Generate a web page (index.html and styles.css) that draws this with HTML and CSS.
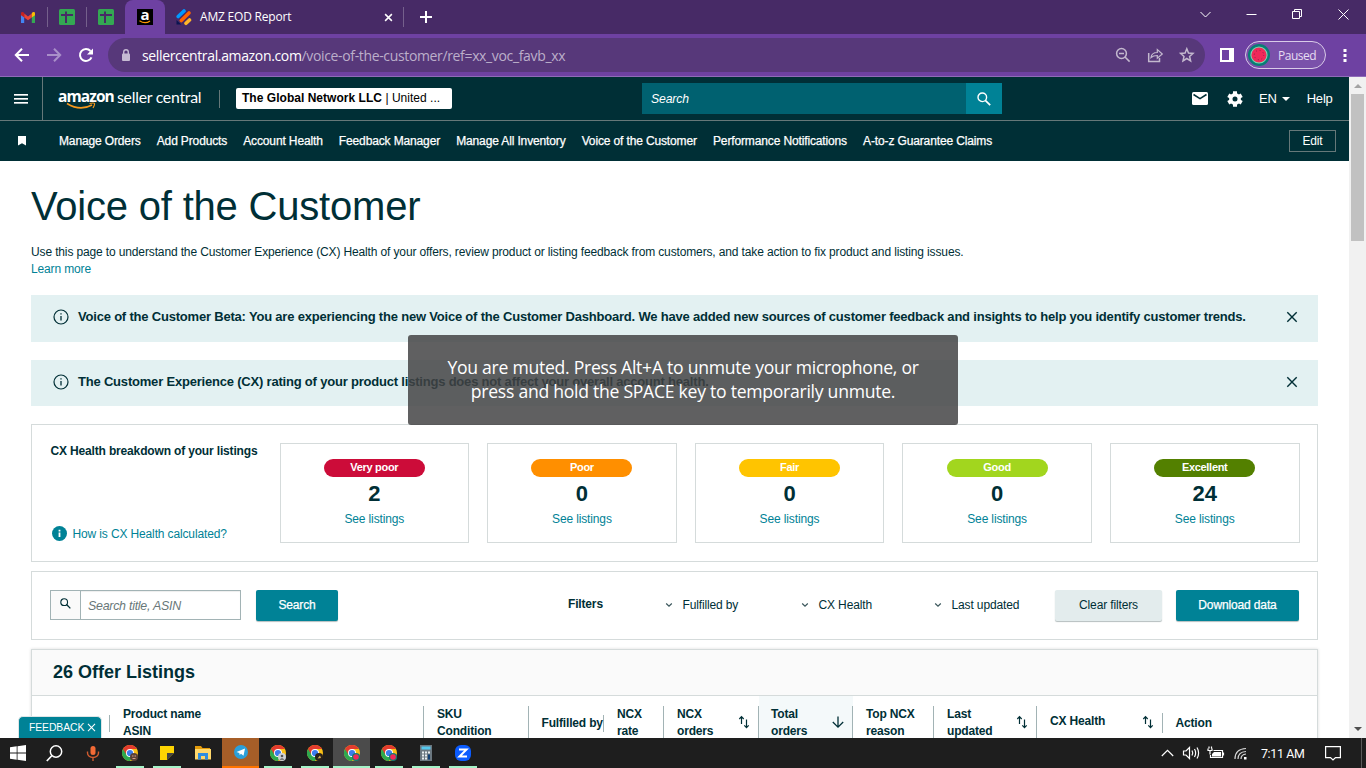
FILE: index.html
```html
<!DOCTYPE html>
<html lang="en">
<head>
    <meta charset="UTF-8">
    <meta name="viewport" content="width=device-width, initial-scale=1.0">
    <title>Voice of the Customer</title>
    <link rel="stylesheet" href="styles.css">
</head>
<body>
    <svg class="defs" width="0" height="0">
        <symbol id="sheet" viewBox="0 0 16 16">
            <rect width="16" height="16" rx="1.5" fill="#34a853"/>
            <path d="M2 6h12M7 2.500v11.500" stroke="#472a66" stroke-width="2"/>
        </symbol>
        <symbol id="chrome" viewBox="0 0 16 16">
            <circle cx="8" cy="8" r="8" fill="#fbc116"/>
            <path d="M8 8 1.070 4A8 8 0 0 0 8 16l3.400-6z" fill="#2da94f"/>
            <path d="M8 4h6.930A8 8 0 0 0 1.070 4l3.500 6z" fill="#e33b2e"/>
            <circle cx="8" cy="8" r="4" fill="#fff"/>
            <circle cx="8" cy="8" r="3.100" fill="#3b7ded"/>
        </symbol>
        <symbol id="info" viewBox="0 0 16 16">
            <circle cx="8" cy="8" r="7" fill="none" stroke="#002f36" stroke-width="1.200"/>
            <path d="M8 7v4.500M8 4.200v1.400" stroke="#002f36" stroke-width="1.300"/>
        </symbol>
        <symbol id="close" viewBox="0 0 12 12">
            <path d="M1.300 1.300l9.400 9.400M10.700 1.300l-9.400 9.400" stroke="currentColor" stroke-width="1.400"/>
        </symbol>
        <symbol id="sort" viewBox="0 0 12 14">
            <path d="M3.500 9V2M1.300 4l2.200-2.300L5.700 4M8.500 4.500v8M6.300 10.300l2.200 2.300 2.200-2.300" fill="none" stroke="#002f36" stroke-width="1.200"/>
        </symbol>
        <symbol id="chevron" viewBox="0 0 8 6">
            <path d="M1.200 1.500L4 4.200l2.800-2.700" fill="none" stroke="#3a565b" stroke-width="1.200"/>
        </symbol>
        <symbol id="magnifier" viewBox="0 0 14 14">
            <circle cx="5.300" cy="5.300" r="4.300" fill="none" stroke="currentColor" stroke-width="1.400"/>
            <path d="M8.300 8.300l4.900 4.900" stroke="currentColor" stroke-width="1.700"/>
        </symbol>
    </svg>

    <!-- browser tabs -->
    <div class="tabs">
        <div class="tab tab-mail">
            <svg width="14" height="11" viewBox="0 0 14 11"><path d="M0 1.500V11h3.200V4.500z" fill="#4285f4"/><path d="M14 1.500V11h-3.200V4.500z" fill="#34a853"/><path d="M3.200 1.500v4L7 8.300l3.800-2.800v-4L7 4.500z" fill="#ea4335"/><path d="M0 1.500C0 0 1.800-.4 3.200.9v4.600L0 3.200z" fill="#c5221f"/><path d="M14 1.500c0-1.500-1.800-1.900-3.200-.6v4.600L14 3.200z" fill="#fbbc04"/></svg>
        </div>
        <div class="tab tab-sheet"><svg width="16" height="16"><use href="#sheet"/></svg></div>
        <div class="tab tab-sheet"><svg width="16" height="16"><use href="#sheet"/></svg></div>
        <div class="tab tab-active">
            <span class="amz-icon">a<svg width="12" height="4" viewBox="0 0 12 4"><path d="M.5.700Q6 4.600 11 1" fill="none" stroke="#ff9900" stroke-width="1.200"/></svg></span>
        </div>
        <div class="tab tab-wide">
            <svg width="16" height="17" viewBox="0 0 16 17"><g stroke-linecap="round" stroke-width="3.600"><path d="M2.200 7.500L8 2" stroke="#0099ff"/><path d="M5.300 11.500L13 4" stroke="#ff6100"/><path d="M10 14.300L13.500 11" stroke="#ffb629"/></g><path d="M.5 11v4.500h4.700z" fill="#0a1551"/></svg>
            <span>AMZ EOD Report</span>
            <svg class="tab-x" width="9" height="9" viewBox="0 0 12 12"><path d="M1.500 1.500l9 9M10.500 1.500l-9 9" stroke="#fff" stroke-width="2"/></svg>
        </div>
        <svg class="new-tab" width="12" height="12" viewBox="0 0 12 12"><path d="M6 0v12M0 6h12" stroke="#fff" stroke-width="2"/></svg>
        <svg class="win-buttons" width="150" height="14" viewBox="0 0 150 14"><g fill="none" stroke="#fff"><path d="M.5 5l5 5 5-5"/><path d="M46.500 7.500h10"/><path d="M92.500 4.500h7v7h-7zM94.500 4.500v-2h7v7h-2"/><path d="M138.500 2.500l10 10M148.500 2.500l-10 10"/></g></svg>
    </div>

    <!-- address bar -->
    <div class="toolbar">
        <svg class="tool-nav" width="80" height="16" viewBox="0 0 80 16"><g fill="none" stroke-width="2"><path d="M15 8H2M8 1.800L1.800 8 8 14.200" stroke="#fff"/><path d="M33 8h13M40 1.800L46.200 8 40 14.200" stroke="#a98fc9"/><path d="M77.500 10.300A6 6 0 1 1 76.500 4" stroke="#fff"/><path d="M79 1.500v6h-6z" fill="#fff" stroke="none"/></g></svg>
        <div class="address">
            <svg width="10" height="13" viewBox="0 0 10 13"><rect x="1" y="4.500" width="8" height="7.500" rx="1" fill="#c6bad3"/><path d="M2.700 5V3a2.300 2.300 0 0 1 4.600 0V5" fill="none" stroke="#c6bad3" stroke-width="1.400"/></svg>
            <span class="url"><b>sellercentral.amazon.com</b>/voice-of-the-customer/ref=xx_voc_favb_xx</span>
            <svg class="address-icons" width="80" height="16" viewBox="0 0 80 16"><g fill="none" stroke="#c3b8ce" stroke-width="1.500"><circle cx="6.500" cy="6.500" r="4.900"/><path d="M4 6.500h5M10 10l4.600 4.600"/><path d="M33.700 6v8.500h10.800V11"/><path d="M36 10.500q.7-5 6.300-5V2.500l5 4.500-5 4.300V8.500q-4 0-6.300 2z" stroke-width="1.200"/><path d="M71.800 1.800l1.700 4.200 4.500.4-3.400 3 1 4.500-3.800-2.400-3.800 2.400 1-4.500-3.400-3 4.500-.4z"/></g></svg>
        </div>
        <svg class="side-panel" width="14" height="14" viewBox="0 0 14 14"><path d="M1 1h12v12H1z" fill="none" stroke="#fff" stroke-width="2"/><path d="M9 1h5v12H9z" fill="#fff"/></svg>
        <div class="profile">
            <svg width="22" height="22" viewBox="0 0 22 22"><circle cx="11" cy="11" r="11" fill="#087e75"/><circle cx="11" cy="11" r="8.600" fill="#7bdcb5"/><circle cx="11" cy="11" r="7.600" fill="#f0295a"/><circle cx="11" cy="11" r="4.700" fill="none" stroke="#8a2644" stroke-dasharray="1 2.700"/></svg>
            <span>Paused</span>
        </div>
        <svg class="dots" width="4" height="14" viewBox="0 0 4 14"><path d="M.5 1h3v3h-3zM.5 6h3v3h-3zM.5 11h3v3h-3z" fill="#fff"/></svg>
    </div>

    <div class="viewport">
        <div class="page">
            <header class="header">
                <div class="menu"><i></i><i></i><i></i></div>
                <div class="logo">
                    <span class="logo-amazon">amazon</span><span class="logo-seller">seller central</span>
                    <svg class="smile" width="30" height="8" viewBox="0 0 30 8"><path d="M1 1.500Q14 9.500 26 3" fill="none" stroke="#f7981d" stroke-width="1.600"/><path d="M23.500 1.500q4.500-1 5 0t-1.500 4.500" fill="none" stroke="#f7981d" stroke-width="1.200"/></svg>
                </div>
                <div class="account"><b>The Global Network LLC</b> | United ...</div>
                <div class="top-search">
                    <span>Search</span>
                    <div class="top-search-btn"><svg width="14" height="14"><use href="#magnifier"/></svg></div>
                </div>
                <svg class="mail" width="16" height="13" viewBox="0 0 16 13"><rect width="16" height="13" rx="1.500" fill="#fff"/><path d="M1.500 2.500L8 6.700l6.500-4.200" fill="none" stroke="#002f36" stroke-width="1.500"/></svg>
                <svg class="gear" width="16" height="16" viewBox="0 0 16 16"><circle cx="8" cy="8" r="4.200" fill="none" stroke="#fff" stroke-width="3.400"/><g stroke="#fff" stroke-width="4"><path d="M8 .3v3M8 12.700v3M1.300 4.200l2.600 1.500M12.100 10.300l2.600 1.500M1.300 11.800l2.600-1.500M12.100 5.700l2.600-1.500"/></g></svg>
                <span class="lang">EN</span>
                <i class="caret"></i>
                <span class="help">Help</span>
            </header>
            <nav class="nav">
                <svg width="8" height="10" viewBox="0 0 8 10"><path d="M0 0h8v9.500L4 7.300 0 9.500z" fill="#fff"/></svg>
                <ul>
                    <li>Manage Orders</li>
                    <li>Add Products</li>
                    <li>Account Health</li>
                    <li>Feedback Manager</li>
                    <li>Manage All Inventory</li>
                    <li>Voice of the Customer</li>
                    <li>Performance Notifications</li>
                    <li>A-to-z Guarantee Claims</li>
                </ul>
                <div class="edit">Edit</div>
            </nav>

            <main>
                <h1>Voice of the Customer</h1>
                <p class="intro">Use this page to understand the Customer Experience (CX) Health of your offers, review product or listing feedback from customers, and take action to fix product and listing issues.</p>
                <a class="learn">Learn more</a>

                <div class="alert">
                    <svg width="16" height="16"><use href="#info"/></svg>
                    <p>Voice of the Customer Beta: You are experiencing the new Voice of the Customer Dashboard. We have added new sources of customer feedback and insights to help you identify customer trends.</p>
                    <svg class="alert-x" width="12" height="12"><use href="#close"/></svg>
                </div>
                <div class="alert second">
                    <svg width="16" height="16"><use href="#info"/></svg>
                    <p>The Customer Experience (CX) rating of your product listings does not affect your overall account health.</p>
                    <svg class="alert-x" width="12" height="12"><use href="#close"/></svg>
                </div>

                <section class="panel health">
                    <div class="health-info">
                        <h3>CX Health breakdown of your listings</h3>
                        <a><svg width="15" height="15" viewBox="0 0 15 15"><circle cx="7.500" cy="7.500" r="7.500" fill="#008296"/><path d="M7.500 6.500v4.500M7.500 3.700v1.700" stroke="#fff" stroke-width="1.800"/></svg><span>How is CX Health calculated?</span></a>
                    </div>
                    <div class="card"><span class="pill very-poor">Very poor</span><b>2</b><a>See listings</a></div>
                    <div class="card"><span class="pill poor">Poor</span><b>0</b><a>See listings</a></div>
                    <div class="card"><span class="pill fair">Fair</span><b>0</b><a>See listings</a></div>
                    <div class="card"><span class="pill good">Good</span><b>0</b><a>See listings</a></div>
                    <div class="card"><span class="pill excellent">Excellent</span><b>24</b><a>See listings</a></div>
                </section>

                <section class="panel filters">
                    <div class="search-box">
                        <div class="search-icon"><svg width="11" height="11"><use href="#magnifier"/></svg></div>
                        <span>Search title, ASIN</span>
                    </div>
                    <div class="btn search-btn">Search</div>
                    <h3>Filters</h3>
                    <div class="filter f1"><svg width="8" height="6"><use href="#chevron"/></svg>Fulfilled by</div>
                    <div class="filter f2"><svg width="8" height="6"><use href="#chevron"/></svg>CX Health</div>
                    <div class="filter f3"><svg width="8" height="6"><use href="#chevron"/></svg>Last updated</div>
                    <div class="btn clear">Clear filters</div>
                    <div class="btn download">Download data</div>
                </section>

                <section class="listings">
                    <h2>26 Offer Listings</h2>
                    <div class="columns">
                        <div class="col short"></div>
                        <div class="col">Product name<br>ASIN</div>
                        <div class="col">SKU<br>Condition</div>
                        <div class="col short one">Fulfilled by</div>
                        <div class="col">NCX<br>rate</div>
                        <div class="col">NCX<br>orders<svg width="12" height="14"><use href="#sort"/></svg></div>
                        <div class="col sorted">Total<br>orders<svg width="12" height="14" viewBox="0 0 12 14"><path d="M6 1.500v10.500M.8 7l5.200 5.200L11.200 7" fill="none" stroke="#002f36" stroke-width="1.300"/></svg></div>
                        <div class="col">Top NCX<br>reason</div>
                        <div class="col">Last<br>updated<svg width="12" height="14"><use href="#sort"/></svg></div>
                        <div class="col short cx">CX Health<svg width="12" height="14"><use href="#sort"/></svg></div>
                        <div class="col one last">Action</div>
                    </div>
                </section>
            </main>
            <div class="feedback">FEEDBACK<svg width="9" height="9"><use href="#close"/></svg></div>
        </div>
        <div class="scrollbar">
            <i class="up"></i>
            <div class="thumb"></div>
            <i class="down"></i>
        </div>
        <div class="toast">You are muted. Press Alt+A to unmute your microphone, or<br>press and hold the SPACE key to temporarily unmute.</div>
    </div>

    <div class="taskbar">
        <div class="task"><svg width="16" height="16" viewBox="0 0 16 16"><path d="M0 2.300l6.700-1v6.300H0zM7.500 1.200L16 0v7.600H7.500zM0 8.400h6.700v6.300L0 13.700zM7.500 8.400H16V16l-8.500-1.200z" fill="#fff"/></svg></div>
        <div class="task search"><svg width="17" height="17" viewBox="0 0 17 17"><circle cx="10" cy="6.500" r="5.700" fill="none" stroke="#fff" stroke-width="1.500"/><path d="M6 10.500L.8 16" stroke="#fff" stroke-width="1.700"/></svg></div>
        <div class="task"><svg width="14" height="15" viewBox="0 0 14 15"><rect x="4.500" width="5" height="9" rx="2.500" fill="#f26a35"/><path d="M1.500 5.500V7a5.500 4.500 0 0 0 11 0V5.500M7 11.500V15" fill="none" stroke="#d15c30" stroke-width="1.400"/></svg></div>
        <div class="task open"><svg width="16" height="16" viewBox="0 0 16 16"><use href="#chrome"/><circle cx="12" cy="12" r="4" fill="#5b4138"/><path d="M10 11h1.500M12.500 11H14M10.500 13.500h3" stroke="#d6a184"/></svg></div>
        <div class="task open"><svg width="14" height="14" viewBox="0 0 14 14"><path d="M0 0h14v14H0z" fill="#fed502"/><path d="M7 7h7l-7 7z" fill="#444"/><path d="M14 7v7H7z" fill="#1f1f1f"/></svg></div>
        <div class="task"><svg width="17" height="14" viewBox="0 0 17 14"><path d="M0 0h6l1.500 2H15v3H0z" fill="#e39b0b"/><path d="M0 3h16v10.500H0z" fill="#ffd86b"/><path d="M3 13.500V7h10v6.500h-3V10H6v3.500z" fill="#2e8de0"/></svg></div>
        <div class="task telegram"><svg width="14" height="14" viewBox="0 0 14 14"><circle cx="7" cy="7" r="7" fill="#2ba0da"/><path d="M2.500 7L11 3.500l-1.500 7.300-2.500-2-1.300 1.300L5.300 8z" fill="#fff"/></svg></div>
        <div class="task open"><svg width="16" height="16" viewBox="0 0 16 16"><use href="#chrome"/><circle cx="12" cy="12" r="4" fill="#cfd2d6"/><circle cx="12" cy="11" r="1.300" fill="#555"/><path d="M9.500 15q2.500-4 5 0z" fill="#777"/></svg></div>
        <div class="task open"><svg width="16" height="16" viewBox="0 0 16 16"><use href="#chrome"/><circle cx="12" cy="12" r="4" fill="#2a211b"/><path d="M10.500 13.500l2.500-3 1 2.500z" fill="#d9b24e"/></svg></div>
        <div class="task open current"><svg width="16" height="16" viewBox="0 0 16 16"><use href="#chrome"/><circle cx="12" cy="12" r="4" fill="#16796f"/><circle cx="12" cy="12" r="2.800" fill="#f0295a"/></svg></div>
        <div class="task open"><svg width="16" height="16" viewBox="0 0 16 16"><use href="#chrome"/><circle cx="12" cy="12" r="4" fill="#16796f"/><circle cx="12" cy="12" r="2.800" fill="#f0295a"/></svg></div>
        <div class="task open"><svg width="12" height="16" viewBox="0 0 12 16"><path d="M0 0h12v16H0z" fill="#6b7780"/><path d="M1.500 1.500h9v3h-9z" fill="#54c8ee"/><path d="M2 6.500h2v2H2zM5 6.500h2v2H5zM8 6.500h2v2H8zM2 9.500h2v2H2zM5 9.500h2v2H5zM2 12.500h2v2H2zM5 12.500h2v2H5z" fill="#e8edf0"/><path d="M8 9.500h2v5H8z" fill="#103f74"/></svg></div>
        <div class="task open"><svg width="16" height="16" viewBox="0 0 16 16"><rect width="16" height="16" rx="6" fill="#0b5cff"/><path d="M4 4.500h7.500L4.500 11.500H12" fill="none" stroke="#fff" stroke-width="2"/></svg></div>
        <svg class="tray" width="90" height="16" viewBox="0 0 90 16"><g fill="none" stroke="#fff" stroke-width="1.200"><path d="M.8 11l5.700-5.700 5.700 5.700"/><path d="M22.500 6h2.500l3.500-3.500v11L25 10h-2.500zM31 5.500q1.500 2.500 0 5M33.500 4q2.300 4 0 8M36 2.500q3.200 5.500 0 11"/><path d="M52.500 5.500h9v7h-12V10M47 3.500v2h4v-2M49 5.500v4M48 1.500v2M50.500 1.500v2M62.500 7.500v3"/><path d="M53 7h7v4.500h-9V9z" fill="#fff" stroke="none"/><path d="M74 14Q74 4 85 3.500M77 14q0-7 8-7.500M80 14q0-4.500 5-5" stroke="#d7d7d7"/><path d="M83 12h2.500v2.500H83z" fill="#fff" stroke="none"/></g></svg>
        <span class="clock">7:11 AM</span>
        <svg class="notice" width="16" height="16" viewBox="0 0 16 16"><path d="M.6 1.600h14.800v11h-4.900L8 15l-2.500-2.400H.6z" fill="none" stroke="#fff" stroke-width="1.200"/></svg>
        <i class="desktop-edge"></i>
    </div>
</body>
</html>
```
FILE: styles.css
```css
* {
    box-sizing: border-box;
}
body {
    margin: 0;
    width: 1366px;
    height: 768px;
    overflow: hidden;
    display: flex;
    flex-direction: column;
    font-family: "Liberation Sans", Arial, sans-serif;
    font-size: 12px;
    letter-spacing: -0.135px;
    color: #002f36;
    background: #fff;
}
h1, h2, h3, p, ul {
    margin: 0;
    padding: 0;
}
svg {
    display: block;
    flex: none;
}
a {
    color: #008296;
}
.defs {
    position: absolute;
}

/* browser */
.tabs {
    display: flex;
    height: 34px;
    background: #472a66;
    color: #fff;
    font: 12px "Open Sans", "Noto Sans", sans-serif;
}
.tab {
    display: flex;
    align-items: center;
    flex: none;
}
.tab-mail {
    width: 47px;
    padding-left: 21px;
}
.tab-sheet {
    width: 39px;
    padding-left: 12px;
    background: linear-gradient(#75608c, #75608c) 0 7px / 1px 20px no-repeat;
}
.tab-active {
    width: 40px;
    justify-content: center;
    background: #6e41a2;
    border-radius: 8px 8px 0 0;
}
.amz-icon {
    position: relative;
    width: 16px;
    height: 16px;
    background: #000;
    color: #fff;
    font: bold 15px/11px "Open Sans", sans-serif;
    text-align: center;
}
.amz-icon svg {
    position: absolute;
    left: 2px;
    bottom: 1px;
}
.tab-wide {
    width: 239px;
    padding-left: 11px;
    background: linear-gradient(#75608c, #75608c) 100% 7px / 1px 20px no-repeat;
}
.tab-wide span {
    margin: -2px 0 0 8px;
    letter-spacing: -0.2px;
}
.tab-x {
    margin-left: auto;
    margin-right: 11px;
}
.new-tab {
    margin: 11px 0 0 16px;
}
.win-buttons {
    margin: 7px 16px 0 auto;
}
.toolbar {
    display: flex;
    align-items: center;
    height: 43px;
    background: #6e41a2;
    border-bottom: 1px solid #8f6bb8;
}
.tool-nav {
    margin-left: 14px;
}
.address {
    display: flex;
    align-items: center;
    width: 1097px;
    height: 34px;
    margin-left: 14px;
    padding: 0 10px 0 13px;
    border-radius: 17px;
    background: #57387a;
}
.url {
    margin-left: 11px;
    font: 14px "Open Sans", "Noto Sans", sans-serif;
    letter-spacing: -0.35px;
    color: #bcafca;
}
.url b {
    font-weight: normal;
    color: #fff;
}
.address-icons {
    margin-left: auto;
}
.side-panel {
    margin-left: 15px;
}
.profile {
    display: flex;
    align-items: center;
    width: 81px;
    height: 28px;
    margin-left: 11px;
    padding-left: 2px;
    border: 1px solid #d9cbe8;
    border-radius: 14px;
    background: #7a51aa;
    color: #e6dcf2;
    font: 12px "Open Sans", sans-serif;
}
.profile span {
    margin-left: 8px;
    letter-spacing: -0.5px;
}
.dots {
    margin-left: 17px;
}

/* page */
.viewport {
    position: relative;
    display: flex;
    height: 661px;
}
.page {
    position: relative;
    width: 1349px;
    height: 661px;
    overflow: hidden;
}
.header {
    display: flex;
    align-items: center;
    height: 44px;
    background: #002f36;
    border-bottom: 1px solid #667879;
    color: #fff;
}
.menu {
    display: flex;
    flex-direction: column;
    justify-content: center;
    gap: 2px;
    width: 43px;
    height: 43px;
    padding-left: 14px;
    border-right: 1px solid #667879;
}
.menu i {
    width: 14px;
    height: 2px;
    background: #fff;
    border-bottom: 1px solid #a9b8ba;
}
.logo {
    position: relative;
    display: flex;
    align-items: center;
    width: 177px;
    height: 18px;
    padding: 0 0 5px 15px;
    border-right: 1px solid #667879;
    font-family: "Open Sans", sans-serif;
    font-size: 15.5px;
    letter-spacing: 0;
    white-space: nowrap;
}
.logo-amazon {
    width: 59px;
    font-weight: bold;
    letter-spacing: -0.9px;
}
.logo-seller {
    font-family: Lato, sans-serif;
    font-size: 15.8px;
    letter-spacing: -0.25px;
}
.smile {
    position: absolute;
    left: 23px;
    bottom: -2px;
}
.account {
    width: 216px;
    height: 21px;
    margin-left: 16px;
    padding-left: 6px;
    border-radius: 2px;
    background: #fff;
    color: #000;
    letter-spacing: 0.03px;
    line-height: 21px;
    white-space: nowrap;
}
.top-search {
    display: flex;
    justify-content: space-between;
    align-items: center;
    width: 360px;
    height: 31px;
    margin-left: 190px;
    padding-left: 9px;
    background: #006170;
    font-size: 12.2px;
    font-style: italic;
}
.top-search-btn {
    display: flex;
    align-items: center;
    justify-content: center;
    width: 36px;
    height: 31px;
    background: #008296;
}
.mail {
    margin-left: 190px;
}
.gear {
    margin-left: 19px;
}
.lang, .help {
    font-size: 13px;
    letter-spacing: -0.2px;
}
.lang {
    margin-left: 16px;
}
.caret {
    margin-left: 5px;
    border: 4px solid transparent;
    border-top-color: #fff;
    border-bottom: 0;
}
.help {
    margin-left: 17px;
}
.nav {
    display: flex;
    align-items: center;
    height: 40px;
    padding: 0 13px 0 18px;
    background: #002f36;
    color: #fff;
}
.nav ul {
    display: flex;
    gap: 16.1px;
    margin: 0 0 0 33px;
    list-style: none;
    line-height: 14px;
    white-space: nowrap;
    -webkit-text-stroke: 0.25px #fff;
}
.edit {
    width: 47px;
    height: 22px;
    margin-left: auto;
    border: 1px solid #667879;
    line-height: 20px;
    text-align: center;
}
main {
    padding: 22px 31px 0;
}
h1 {
    font-size: 40px;
    font-weight: normal;
    letter-spacing: -0.2px;
    line-height: 46px;
}
.intro {
    margin-top: 15px;
    line-height: 17px;
    white-space: nowrap;
}
.learn {
    display: block;
    line-height: 17px;
}
.alert {
    display: flex;
    width: 1287px;
    height: 47px;
    margin-top: 17px;
    padding: 14px 20px 0 22px;
    background: #e3f1f2;
}
.alert.second {
    height: 46px;
    margin-top: 18px;
}
.alert p {
    margin-left: 9px;
    font-size: 13px;
    font-weight: bold;
    letter-spacing: -0.2px;
    line-height: 16px;
    white-space: nowrap;
}
.alert-x {
    margin: 2px 0 0 auto;
}
.panel {
    width: 1287px;
    border: 1px solid #d5dbdb;
}
h3 {
    font-size: 12px;
    letter-spacing: -0.16px;
    line-height: 16px;
}
.health {
    display: grid;
    grid-template-columns: 211px repeat(5, 1fr);
    column-gap: 18px;
    height: 138px;
    margin-top: 18px;
    padding: 18px 17.5px 18px 18.5px;
}
.health-info {
    display: flex;
    flex-direction: column;
    justify-content: space-between;
    white-space: nowrap;
}
.health-info a {
    display: flex;
    align-items: center;
    gap: 6px;
    margin-bottom: 2px;
    padding-left: 1px;
}
.card {
    display: flex;
    flex-direction: column;
    align-items: center;
    height: 100px;
    padding-top: 15px;
    border: 1px solid #d5dbdb;
}
.pill {
    width: 101px;
    height: 18px;
    border-radius: 9px;
    color: #fff;
    font-size: 11px;
    font-weight: bold;
    letter-spacing: -0.3px;
    line-height: 17px;
    text-align: center;
}
.very-poor { background: #cc0c39; }
.poor { background: #ff8f00; }
.fair { background: #ffc400; }
.good { background: #a2d61e; }
.excellent { background: #538000; }
.card b {
    margin-top: 5px;
    font-size: 22px;
    line-height: 24px;
}
.card a {
    margin-top: 5px;
    line-height: 16px;
}
.filters {
    display: flex;
    align-items: center;
    height: 69px;
    margin-top: 9px;
    padding: 0 18px 1px;
    white-space: nowrap;
}
.search-box {
    display: flex;
    align-items: center;
    width: 191px;
    height: 30px;
    border: 1px solid #a2b3b5;
    box-shadow: inset 0 1px 1px #eee;
    color: #687778;
    font-size: 12.4px;
    font-style: italic;
    letter-spacing: -0.25px;
}
.search-box span {
    padding-top: 1px;
}
.search-icon {
    width: 30px;
    height: 28px;
    margin-right: 7px;
    padding: 7px 0 0 9px;
    border-right: 1px solid #a2b3b5;
    background: #fafafa;
    color: #002f36;
}
.btn {
    height: 31px;
    border-radius: 2px;
    background: #008296;
    box-shadow: 0 1px 1px #b5bebf;
    color: #fff;
    line-height: 30px;
    text-align: center;
}
.search-btn, .download {
    -webkit-text-stroke: 0.25px #fff;
}
.search-btn {
    width: 82px;
    margin-left: 15px;
}
.filters h3 {
    width: 97px;
    margin: 0 0 2px 230px;
}
.filter {
    display: flex;
    align-items: center;
    gap: 9.5px;
}
.f1 { width: 136px; }
.f2 { width: 133px; }
.clear {
    width: 107px;
    margin-left: auto;
    background: #e3eced;
    color: #002f36;
}
.download {
    width: 123px;
    margin-left: 14px;
}
.listings {
    width: 1287px;
    height: 150px;
    margin-top: 9px;
    border: 1px solid #d5dbdb;
    box-shadow: 0 0 3px #ddd;
}
h2 {
    height: 46px;
    padding-left: 21px;
    border-bottom: 1px solid #d5dbdb;
    background: #fafafa;
    font-size: 18px;
    letter-spacing: 0;
    line-height: 44px;
}
.columns {
    display: grid;
    grid-template-columns: 78px 314px 105px 75px 60px 95px 94px 81px 103px 126px 1fr;
    height: 50px;
    font-weight: bold;
    letter-spacing: -0.17px;
    line-height: 17px;
    white-space: nowrap;
}
.col {
    position: relative;
    padding: 10px 0 0 13px;
    background: linear-gradient(#a2b3b5, #a2b3b5) 100% 10px / 1px 60px no-repeat;
}
.col.short {
    background-position: 100% 19px;
    background-size: 1px 17px;
}
.col.one {
    padding: 19px 0 0 12.5px;
}
.col.short.cx {
    padding-top: 17px;
    background-position: 100% 17px;
    background-size: 1px 20px;
}
.col.last {
    background: none;
}
.col.sorted {
    background-color: #f4f9fa;
    padding-left: 12px;
}
.col svg {
    position: absolute;
    top: 19px;
    right: 9px;
}
.feedback {
    position: absolute;
    left: 18px;
    bottom: 0;
    display: flex;
    align-items: center;
    gap: 3px;
    width: 84px;
    height: 22px;
    padding-left: 10px;
    border: 1px solid #dfe5e6;
    border-bottom: 0;
    border-radius: 5px 5px 0 0;
    background: #008296;
    color: #fff;
    font-size: 10.4px;
    letter-spacing: -0.1px;
}
.scrollbar {
    display: flex;
    flex-direction: column;
    align-items: center;
    width: 17px;
    height: 661px;
    background: #f1f1f1;
}
.up, .down {
    border: 4px solid transparent;
}
.up {
    margin-top: 7px;
    border-top: 0;
    border-bottom-color: #a3a3a3;
}
.down {
    margin: auto 0 7px;
    border-bottom: 0;
    border-top-color: #505050;
}
.thumb {
    width: 13px;
    height: 147px;
    margin-top: 6px;
    background: #c1c1c1;
}
.toast {
    position: absolute;
    left: 408px;
    top: 258px;
    width: 550px;
    height: 90px;
    padding-top: 20px;
    border-radius: 3px;
    background: rgba(65, 66, 67, 0.84);
    color: #fff;
    font: 17.6px/24px "Open Sans", "Noto Sans", sans-serif;
    letter-spacing: -0.27px;
    text-align: center;
    white-space: nowrap;
}

/* taskbar */
.taskbar {
    display: flex;
    align-items: center;
    height: 30px;
    background: #1e1e1e;
    color: #fff;
}
.task {
    display: flex;
    align-items: center;
    justify-content: center;
    width: 37px;
    height: 30px;
}
.task:first-child {
    padding-right: 1px;
}
.task.search {
    padding-right: 3px;
}
.task.open {
    background: linear-gradient(#a5f3c8, #a5f3c8) 50% 100% / 28px 2px no-repeat;
}
.task.current {
    background-color: #4b4b4b;
    background-size: 100% 2px;
}
.task.telegram {
    background: #a65e28;
    border-bottom: 2px solid #ff7300;
}
.tray {
    margin-left: auto;
}
.clock {
    width: 45px;
    margin-left: 10px;
    font: 12.4px Roboto, sans-serif;
    letter-spacing: -0.35px;
    white-space: nowrap;
}
.notice {
    margin-left: 19px;
}
.desktop-edge {
    width: 1px;
    height: 30px;
    margin: 0 4px 0 20px;
    background: #5a5a5a;
}
```
